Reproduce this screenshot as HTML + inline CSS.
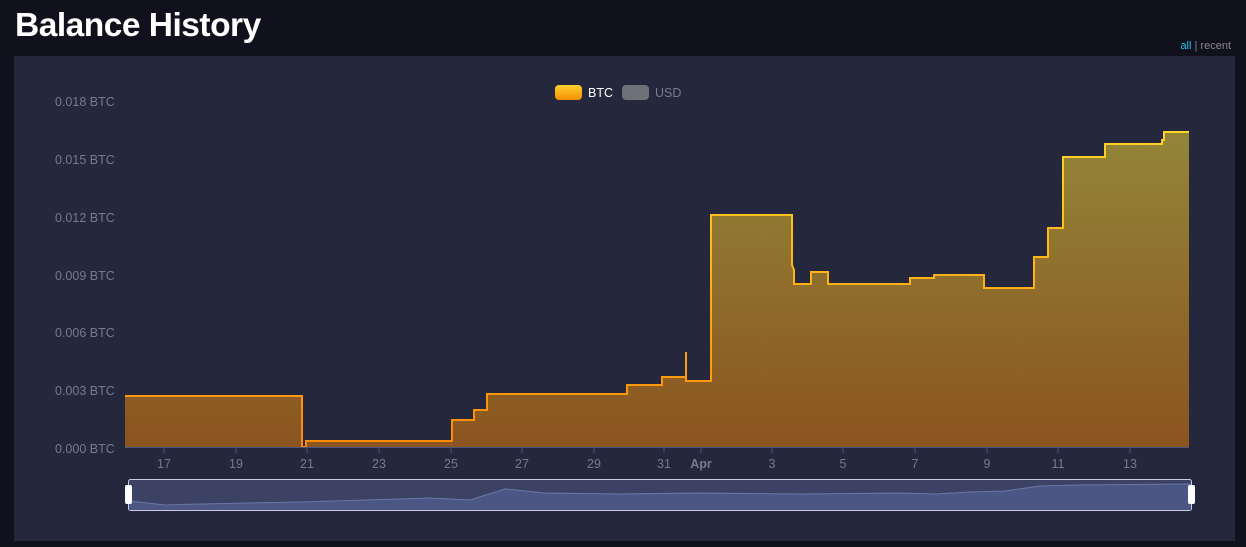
<!DOCTYPE html>
<html><head><style>
body{margin:0;width:1246px;height:547px;background:#10111c;overflow:hidden;font-family:"Liberation Sans",sans-serif;position:relative}
h1{position:absolute;left:15px;top:7px;margin:0;font-size:33.5px;color:#fff;font-weight:bold;letter-spacing:-0.5px}
.sw{position:absolute;right:15px;top:40px;font-size:11px;color:#888}
.sw b{color:#27c3e6;font-weight:normal}
.panel{position:absolute;left:14px;top:56px;width:1221px;height:485px;background:#25273d}
svg{position:absolute;left:0;top:0}
</style></head><body>
<h1>Balance History</h1>
<div class="sw"><b>all</b> | recent</div>
<div class="panel"></div>
<svg width="1246" height="547" font-family="Liberation Sans, sans-serif">
<defs>
<linearGradient id="f" x1="0" y1="130" x2="0" y2="447" gradientUnits="userSpaceOnUse"><stop offset="0" stop-color="#938638"/><stop offset="1" stop-color="#8b5420"/></linearGradient>
<linearGradient id="s" x1="0" y1="130" x2="0" y2="447" gradientUnits="userSpaceOnUse"><stop offset="0" stop-color="#ffd428"/><stop offset="1" stop-color="#ff8a00"/></linearGradient>
<linearGradient id="lg" x1="0" y1="0" x2="0" y2="1"><stop offset="0" stop-color="#ffd030"/><stop offset="1" stop-color="#f59000"/></linearGradient>
</defs>
<g fill="#777a8c" font-size="12.5">
<text x="55" y="106">0.018 BTC</text><text x="55" y="164">0.015 BTC</text><text x="55" y="222">0.012 BTC</text><text x="55" y="280">0.009 BTC</text><text x="55" y="337">0.006 BTC</text><text x="55" y="395">0.003 BTC</text><text x="55" y="453">0.000 BTC</text>
</g>
<rect x="555" y="85" width="27" height="15" rx="4" fill="url(#lg)"/><text x="588" y="97" fill="#fff" font-size="12.5">BTC</text>
<rect x="622" y="85" width="27" height="15" rx="4" fill="#6f7179"/><text x="655" y="97" fill="#777a8c" font-size="12.5">USD</text>
<path d="M125,396H302V447H306V441H452V420H474V410H487V394H627V385H662V377H686V352V381H711V215H792V265L794,270V284H811V272H828V284H910V278H934V275H984V288H1034V257H1048V228H1063V157H1105V144H1162V140H1164V132H1189V447H125Z" fill="url(#f)"/>
<path d="M125,396H302V447H306V441H452V420H474V410H487V394H627V385H662V377H686V352V381H711V215H792V265L794,270V284H811V272H828V284H910V278H934V275H984V288H1034V257H1048V228H1063V157H1105V144H1162V140H1164V132H1189" fill="none" stroke="url(#s)" stroke-width="2"/>
<line x1="125" y1="447.5" x2="1189" y2="447.5" stroke="#4a5580"/>
<g stroke="#4a5580"><line x1="164" y1="448" x2="164" y2="453"/><line x1="236" y1="448" x2="236" y2="453"/><line x1="307" y1="448" x2="307" y2="453"/><line x1="379" y1="448" x2="379" y2="453"/><line x1="451" y1="448" x2="451" y2="453"/><line x1="522" y1="448" x2="522" y2="453"/><line x1="594" y1="448" x2="594" y2="453"/><line x1="664" y1="448" x2="664" y2="453"/><line x1="701" y1="448" x2="701" y2="453"/><line x1="772" y1="448" x2="772" y2="453"/><line x1="843" y1="448" x2="843" y2="453"/><line x1="915" y1="448" x2="915" y2="453"/><line x1="987" y1="448" x2="987" y2="453"/><line x1="1058" y1="448" x2="1058" y2="453"/><line x1="1130" y1="448" x2="1130" y2="453"/></g>
<g fill="#777a8c" font-size="12.5" text-anchor="middle">
<text x="164" y="468">17</text><text x="236" y="468">19</text><text x="307" y="468">21</text><text x="379" y="468">23</text><text x="451" y="468">25</text><text x="522" y="468">27</text><text x="594" y="468">29</text><text x="664" y="468">31</text><text x="701" y="468" font-weight="bold">Apr</text><text x="772" y="468">3</text><text x="843" y="468">5</text><text x="915" y="468">7</text><text x="987" y="468">9</text><text x="1058" y="468">11</text><text x="1130" y="468">13</text>
</g>
<rect x="128.5" y="479.5" width="1063" height="31" rx="2" fill="#3b4264" stroke="#c8cce0"/>
<path d="M129,501L165,505L200,504L300,502L400,499L430,498L470,500L505,489L545,493L620,494L700,493L800,494L900,493L935,494L970,492L1005,491L1040,486L1080,485L1191,484V510H129Z" fill="#4b5684"/>
<path d="M129,501L165,505L200,504L300,502L400,499L430,498L470,500L505,489L545,493L620,494L700,493L800,494L900,493L935,494L970,492L1005,491L1040,486L1080,485L1191,484" fill="none" stroke="#6b78a6"/>
<rect x="125" y="485" width="7" height="19" rx="2" fill="#fff"/>
<rect x="1188" y="485" width="7" height="19" rx="2" fill="#fff"/>
</svg>
</body></html>
